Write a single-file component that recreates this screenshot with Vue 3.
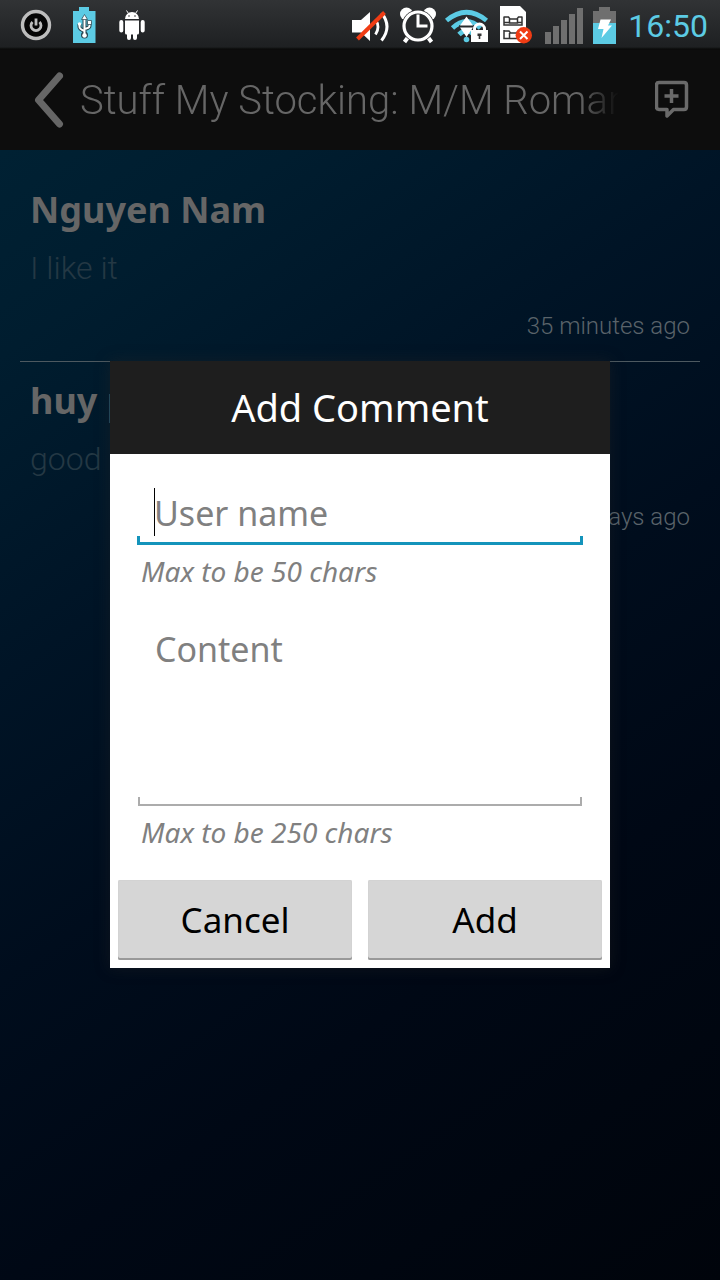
<script setup>
import { ref } from 'vue'

const comments = [
  { name: 'Nguyen Nam', text: 'I like it', time: '35 minutes ago' },
  { name: 'huy p', text: 'good', time: 'days ago' },
]
const userName = ref('')
const content = ref('')
</script>

<template>
  <div class="screen">
    <header class="status">
      <div class="group left">
        <svg width="32" height="50" viewBox="20 0 32 50">
          <circle cx="36" cy="25" r="13.5" fill="#050505" stroke="#bdbdbd" stroke-width="3.4" />
          <path d="M32.500 22a5 5 0 1 0 7 0M36 18.500v7" fill="none" stroke="#bdbdbd" stroke-width="2.8" />
        </svg>
        <svg width="24" height="50" viewBox="73 0 24 50">
          <path d="M73 11h6V7h10v4h6.500v32H73z" fill="#5ccbe4" />
          <g fill="none" stroke="#26424c" stroke-width="4">
            <path d="M84.500 17v18M79.500 24v3q0 2 5 4M89.500 22v4q0 2-5 3" />
            <circle cx="84.500" cy="35" r="1.500" />
          </g>
          <g fill="none" stroke="#fff" stroke-width="2">
            <path d="M84.500 18v17M79.500 24v3q0 2 5 4M89.500 22v4q0 2-5 3" />
          </g>
          <path d="M84.500 14.500l3 5h-6zM87.500 20.500h4v4h-4z" fill="#fff" stroke="#26424c" stroke-width=".7" />
          <circle cx="84.500" cy="35.500" r="2.300" fill="#fff" />
          <circle cx="79.500" cy="24" r="1.700" fill="#fff" />
        </svg>
        <svg width="28" height="50" viewBox="118 0 28 50">
          <path d="M125 19a7 7 0 0 1 14 0zM125 20.500h14V33q0 1.500-1.500 1.500h-11q-1.500 0-1.500-1.500z" fill="#fff" />
          <path d="M121.300 22v8.500M142.700 22v8.500M129 34v4M135 34v4" stroke="#fff" stroke-width="4" stroke-linecap="round" />
          <path d="M128.500 13.500l-2-3M135.500 13.500l2-3" stroke="#fff" stroke-width="1" />
          <circle cx="129" cy="16" r=".8" fill="#333" /><circle cx="135" cy="16" r=".8" fill="#333" />
        </svg>
      </div>
      <div class="group right">
        <svg width="40" height="50" viewBox="351 0 40 50">
          <path d="M352 20h9l9-8v29l-9-8.500h-9z" fill="#fff" />
          <path d="M375.500 19.500q5 7.500 0 15" fill="none" stroke="#fff" stroke-width="2.800" />
          <path d="M381.500 13q11 13.500 0 27.500" fill="none" stroke="#fff" stroke-width="3" />
          <path d="M357.500 39L384.500 12.500" stroke="#f03c14" stroke-width="4" />
        </svg>
        <svg width="38" height="50" viewBox="399 0 38 50">
          <circle cx="406.500" cy="14" r="6.500" fill="#fff" /><circle cx="429.500" cy="14" r="6.500" fill="#fff" />
          <path d="M409 36l-4.500 6M427 36l4.500 6" stroke="#fff" stroke-width="4" />
          <circle cx="418" cy="26" r="16.200" fill="#292b2d" />
          <circle cx="418" cy="26" r="14" fill="none" stroke="#fff" stroke-width="3.200" />
          <path d="M418 14.500v11.500h9.500" fill="none" stroke="#fff" stroke-width="3" />
        </svg>
        <svg width="44" height="50" viewBox="445 0 44 50">
          <g fill="none" stroke="#5ccbe4" stroke-width="4.800">
            <path d="M446.500 20.500q20-16.500 40 0M452.500 28q14-13 28 0M459 34.500q7.500-7.500 15 0" />
          </g>
          <circle cx="466.500" cy="39.500" r="2.800" fill="#5ccbe4" />
          <path d="M459 25.200h15v2.300h-15z" fill="#292b2d" />
          <path d="M466.500 16.500l6.500 9h-13zM466.500 37l6.500-9.500h-13z" fill="#fff" />
          <path d="M474.500 31v-2a5 5 0 0 1 10 0V31" fill="none" stroke="#fff" stroke-width="3" />
          <path d="M471 30h17v12h-17z" fill="#fff" />
          <path d="M477.500 33.500h4v2.500h-1.200v3h-1.600v-3h-1.200z" fill="#333" />
        </svg>
        <svg width="36" height="50" viewBox="497 0 36 50">
          <path d="M500 6h20l6 6v31h-26z" fill="#fff" />
          <path d="M503.500 17h5l1.500 2h7l1.500-2h4M504 17v8h18v-8M509.500 19v4h8v-4M504 25v-2.500h5.500M517.500 22.500h4.500M504 31h5l1.500 2h6l1.500-2h4M504 30v8.500h13M509.500 33v5" fill="none" stroke="#333" stroke-width="1.500" />
          <circle cx="523.800" cy="35.300" r="8.200" fill="#f03c14" />
          <path d="M520 31.500l7.500 7.500M527.500 31.500l-7.500 7.500" stroke="#fff" stroke-width="2" />
        </svg>
        <svg width="44" height="50" viewBox="541 0 44 50">
          <path d="M545 32h6v12h-6zM553 26h6v18h-6zM561 20h6v24h-6zM569 14h6v30h-6zM577 8h6v36h-6z" fill="#6f6f6f" />
        </svg>
        <svg width="24" height="50" viewBox="593 0 24 50">
          <path d="M593 11h6V7h11v4h6v12h-23z" fill="#6f6f6f" />
          <path d="M593 23h23v21h-23z" fill="#5ccbe4" />
          <path d="M600.500 19.500h10.500l-3 6h4l-10.500 12.500 2-9h-5.500z" fill="#fff" />
        </svg>
        <time class="clock">16:50</time>
      </div>
    </header>

    <nav class="bar">
      <button class="icon-btn" aria-label="Back">
        <svg width="30" height="56" viewBox="34 72 30 56">
          <path d="M59.500 76L38.500 100l21 24" fill="none" stroke="#666" stroke-width="7" stroke-linecap="round" stroke-linejoin="round" />
        </svg>
      </button>
      <h1 class="title">Stuff My Stocking: M/M Roman</h1>
      <button class="icon-btn" aria-label="Add comment">
        <svg width="34" height="40" viewBox="655 80 34 40">
          <path d="M659 82.500h25q2.500 0 2.500 2.500v22q0 2.500-2.500 2.500h-10.500l-6.500 6.500v-6.500h-8q-2.500 0-2.500-2.500V85q0-2.500 2.500-2.500z" fill="none" stroke="#6a6a6a" stroke-width="3.500" stroke-linejoin="round" />
          <path d="M671.500 89v14M664.500 96h14" stroke="#6a6a6a" stroke-width="3.500" />
        </svg>
      </button>
    </nav>

    <ul class="list">
      <li v-for="c in comments" :key="c.name" class="item">
        <h2 class="name">{{ c.name }}</h2>
        <p class="text">{{ c.text }}</p>
        <time class="ago">{{ c.time }}</time>
      </li>
    </ul>

    <div class="overlay">
      <form class="dialog" role="dialog" aria-labelledby="dialog-title" @submit.prevent>
        <h2 id="dialog-title" class="dialog-title">Add Comment</h2>
        <div class="fields">
          <div class="name-field">
            <input id="user-name" v-model="userName" class="field focused" type="text" maxlength="50" placeholder="User name" aria-label="User name" />
          </div>
          <label class="hint" for="user-name">Max to be 50 chars</label>
          <textarea id="content" v-model="content" class="field area" maxlength="250" placeholder="Content" aria-label="Content"></textarea>
          <label class="hint" for="content">Max to be 250 chars</label>
        </div>
        <div class="actions">
          <button type="button" class="btn">Cancel</button>
          <button type="submit" class="btn">Add</button>
        </div>
      </form>
    </div>
  </div>
</template>

<style>
body {
  background: #00050e;
}
</style>

<style scoped>
.screen {
  position: relative;
  display: flex;
  flex-direction: column;
  min-height: 100vh;
  font-family: "Noto Sans", "Open Sans", sans-serif;
  background: linear-gradient(145deg, #002436 0%, #001d2f 20%, #001426 38%, #000d1d 55%, #000815 72%, #00040b 100%);
}
h1, h2, p, ul {
  margin: 0;
  padding: 0;
}
svg {
  display: block;
  flex: none;
}
.status {
  display: flex;
  justify-content: space-between;
  height: 50px;
  padding: 0 12px 0 20px;
  background: linear-gradient(#313335 0, #1e2022 47px, #0b0b0b 49px);
}
.group {
  display: flex;
}
.left {
  gap: 21px;
}
.right {
  gap: 8px;
}
.clock {
  min-width: 83px;
  text-align: right;
  font: 400 32px/52px Roboto, sans-serif;
  color: #5ccbe4;
}
.bar {
  display: flex;
  align-items: center;
  height: 100px;
  padding: 0 31px 0 34px;
  background: #0d0d0d;
}
.icon-btn {
  flex: none;
  padding: 0;
  border: 0;
  background: none;
}
.title {
  flex: 1;
  min-width: 0;
  margin: 0 36px 0 16px;
  padding-top: 2px;
  overflow: hidden;
  white-space: nowrap;
  font: 300 40px/60px Roboto, sans-serif;
  color: #666;
  mask-image: linear-gradient(to left, transparent, #000 40px);
}
.list {
  padding: 20px 20px 0;
  list-style: none;
}
.item {
  box-sizing: border-box;
  display: flex;
  flex-direction: column;
  height: 191px;
  padding: 0 10px;
  border-top: 1px solid transparent;
}
.item + .item {
  border-top-color: #4d5960;
}
.name {
  padding-top: 8px;
  font-size: 36px;
  line-height: 62px;
  font-weight: 700;
  color: #666;
}
.text {
  font: 300 32px/54px Roboto, sans-serif;
  color: #243844;
}
.ago {
  align-self: flex-end;
  font: 300 24px/62px Roboto, sans-serif;
  color: #5a636a;
}
.overlay {
  position: absolute;
  inset: 48px 0 0;
  display: flex;
  align-items: center;
  justify-content: center;
}
.dialog {
  width: calc(100% - 220px);
  background: #fff;
  box-shadow: 0 0 14px rgba(40, 40, 40, 0.4);
}
.dialog-title {
  font-size: 38px;
  line-height: 93px;
  font-weight: 400;
  text-align: center;
  color: #fff;
  background: #1e1e1e;
}
.fields {
  display: flex;
  flex-direction: column;
  padding: 30px 27px 0;
}
.name-field {
  position: relative;
  display: flex;
}
.name-field::before {
  content: "";
  position: absolute;
  left: 17px;
  top: 4px;
  width: 1px;
  height: 48px;
  background: #000;
}
.field {
  --line: #acacac;
  --thick: 2px;
  box-sizing: border-box;
  width: 100%;
  margin: 0;
  padding: 0 17px;
  border: 0;
  outline: 0;
  font-family: inherit;
  font-size: 34px;
  line-height: 48px;
  color: #000;
  background:
    linear-gradient(var(--line), var(--line)) left bottom / 100% var(--thick) no-repeat,
    linear-gradient(var(--line), var(--line)) left bottom / var(--thick) 9px no-repeat,
    linear-gradient(var(--line), var(--line)) right bottom / var(--thick) 9px no-repeat;
}
.field::placeholder {
  color: #808080;
  opacity: 1;
}
.focused {
  --line: #1494bb;
  --thick: 3px;
  height: 61px;
  padding-bottom: 2px;
}
.area {
  width: auto;
  height: 184px;
  margin: 21px 1px 0;
  padding-top: 3px;
  resize: none;
}
.hint {
  padding: 0 0 4px 4px;
  font-size: 28px;
  font-style: italic;
  line-height: 52px;
  color: #808080;
}
.actions {
  display: flex;
  gap: 16px;
  padding: 18px 8px 8px;
}
.btn {
  flex: 1;
  height: 80px;
  padding: 0;
  border: 0;
  border-radius: 2px;
  font-family: inherit;
  font-size: 35px;
  color: #000;
  background: #d6d6d6;
  box-shadow: inset 0 -2px 0 #999, inset 0 0 1px #bbb;
}
</style>
